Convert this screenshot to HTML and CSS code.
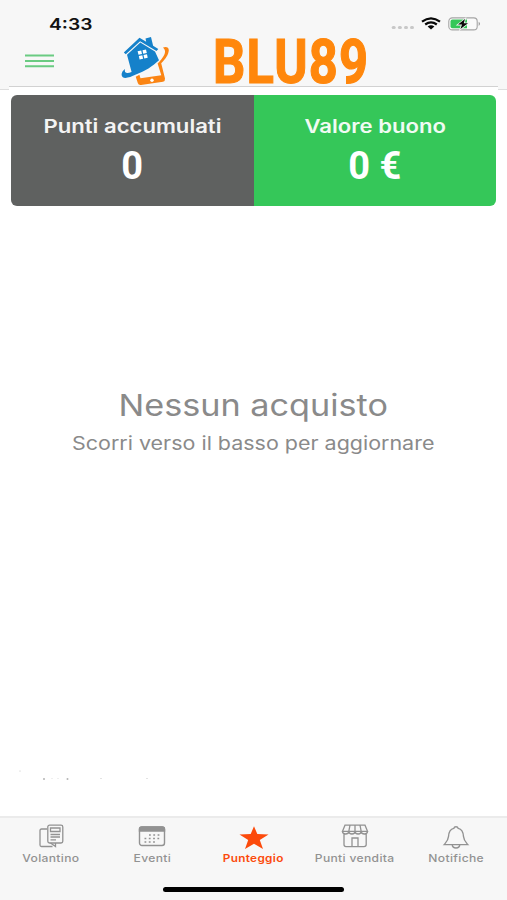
FILE: index.html
```html
<!DOCTYPE html>
<html lang="it">
<head>
<meta charset="utf-8">
<title>BLU89</title>
<link rel="stylesheet" href="styles.css">
</head>
<body>
<div class="app">
  <header class="header">
    <div class="status">
      <span class="time"><span class="fit">4:33</span></span>
      <div class="indicators">
        <svg class="signal" width="24" height="5" viewBox="0 0 24 5" fill="#c8c8c8"><rect x="0.7" y="1" width="4" height="3" rx="1.5"/><rect x="6.9" y="1" width="4" height="3" rx="1.5"/><rect x="13" y="1" width="4" height="3" rx="1.5"/><rect x="19" y="1" width="4" height="3" rx="1.5"/></svg>
        <svg class="wifi" width="20" height="13" viewBox="0 0 20 13" fill="none" stroke="#080808" stroke-width="2.2"><path d="M1 4.7Q10-1.9 19 4.7M4.2 7.5Q10 3.2 15.8 7.5"/><path d="M6.6 9.4Q10 7 13.4 9.4L10 12.4Z" fill="#080808" stroke="none"/></svg>
        <svg class="battery" width="33" height="14" viewBox="0 0 33 14"><rect x=".8" y=".9" width="28.4" height="12" rx="3.5" fill="#fafafa" stroke="#a5a5a5" stroke-width="1.1"/><path d="M4.5 2.5H19V11.3H4.5Q2.5 11.3 2.5 9.3V4.5Q2.5 2.5 4.5 2.5Z" fill="#35c759"/><path d="M17 2L10 7.6H14L12.4 12L20 6.2H15.8Z" fill="#080808" stroke="#f5f5f5" stroke-width="1.6" paint-order="stroke"/><path d="M30.7 4.8Q33.3 6.8 30.7 9Z" fill="#999"/></svg>
      </div>
    </div>
    <div class="brandbar">
      <svg class="menu" width="29" height="14" viewBox="0 0 29 14" stroke="#6acb82" stroke-width="2"><path d="M0 1.5H29M0 7H29M0 12.3H29"/></svg>
      <svg class="logo" width="50" height="50" viewBox="0 0 50 50">
        <path d="M42 10.5Q47.5 9 47.8 13.2C47.6 17.5 44.5 22 40.2 26.2L44 41.5Q44.3 44 42 44.7L20 48Q17.4 48.3 16.8 46L14.7 39.8L18.4 37.8L19.5 41.3L40.3 38.2L36.6 26.5C42 21 47 14.6 42 10.5Z" fill="#fb8514"/>
        <circle cx="31" cy="43.3" r="1.7" fill="#fff"/>
        <path d="M2.8 15.4L18.5 0.7L25.2 4.7L24.5 1.6L30 0L32.1 8.8L37.3 12L35.5 14.1L19.1 4.2L4.8 17.3Z" fill="#1581ca"/>
        <path d="M6 17.8L19.3 5.5L34 14.4L38 23.3C31.8 29.3 23.8 34.4 14.9 37.6C8 41 1.2 42.8.6 38C.4 35.6 2 33.4 4 32C3 36 5.6 37 10.6 35Z" fill="#1581ca"/>
        <path d="M16.6 14.3L20.2 13.5L21 17L17.5 17.8ZM21.5 13.2L25 12.4L25.8 16L22.2 16.7ZM17.8 19L21.3 18.3L22.1 21.7L18.6 22.4ZM22.5 18L26 17.3L26.7 20.7L23.3 21.4Z" fill="#fff"/>
      </svg>
      <h1 class="brand"><span class="fit">BLU89</span></h1>
    </div>
  </header>
  <main class="main">
    <section class="summary">
      <div class="card card-points"><p class="card-label"><span class="fit">Punti accumulati</span></p><p class="card-value">0</p></div>
      <div class="card card-value-bg"><p class="card-label"><span class="fit">Valore buono</span></p><p class="card-value">0 €</p></div>
    </section>
    <section class="empty">
      <h2><span class="fit">Nessun acquisto</span></h2>
      <p><span class="fit">Scorri verso il basso per aggiornare</span></p>
    </section>
    <svg class="specks" width="140" height="12" viewBox="0 0 140 12" fill="#b5b5b5"><circle cx="11" cy="2" r=".5"/><circle cx="35" cy="10" r="1"/><circle cx="43" cy="9.5" r=".4"/><circle cx="49" cy="9.5" r=".4"/><circle cx="58.5" cy="10" r="1"/><circle cx="92" cy="9.5" r=".5"/><circle cx="138" cy="9.5" r=".5"/></svg>
  </main>
  <footer class="footer">
    <nav class="tabs">
      <a class="tab"><svg width="28" height="26" viewBox="0 0 28 26" fill="none" stroke="#929292" stroke-width="1.3"><path d="M10 5H4.5Q3 5 3 6.5V21Q3 22.5 4.5 22.5H15.5M13.5 19L18.5 22.5V19"/><rect x="10.8" y="1.2" width="15" height="17.8" rx="1.8"/><path d="M13.5 4H23V7.5H13.5ZM13.5 10.5H23M13.5 13H23M13.5 15.8H19"/></svg><span class="fit">Volantino</span></a>
      <a class="tab"><svg width="28" height="26" viewBox="0 0 28 26" fill="none" stroke="#929292" stroke-width="1.4"><rect x="1.5" y="3" width="25" height="18.5" rx="2.5"/><path d="M1.5 7V5Q1.5 3 4 3H24Q26.5 3 26.5 5V7Z" fill="#929292"/><path d="M11 11H23M6.5 14.5H23M6.5 18H19" stroke-width="1.7" stroke-dasharray="1.8 2.5"/></svg><span class="fit">Eventi</span></a>
      <a class="tab active"><svg width="30" height="26" viewBox="0 0 30 26"><path d="M15 2.3L18.3 10.1L29.5 10.4L20.8 16L24 25L15 19.8L6 25L9.2 16L.5 10.4L11.7 10.1Z" fill="#fc4a0b"/></svg><span class="fit">Punteggio</span></a>
      <a class="tab"><svg width="28" height="26" viewBox="0 0 28 26" fill="none" stroke="#929292" stroke-width="1.3"><path d="M4 1.2H24L26.5 7.3H1.5ZM9 1.2L7.8 7.3M14 1.2V7.3M19 1.2L20.2 7.3M1.5 7.3Q1.5 10 4.5 10Q7.8 10 7.8 7.3Q7.8 10 11 10Q14 10 14 7.3Q14 10 17.2 10Q20.2 10 20.2 7.3Q20.2 10 23.4 10Q26.5 10 26.5 7.3M3 10V20.5Q3 22.6 5 22.6H23Q25.2 22.6 25.2 20.5V10M11 22.6V14H17V22.6"/></svg><span class="fit">Punti vendita</span></a>
      <a class="tab"><svg width="28" height="26" viewBox="0 0 28 26" fill="none" stroke="#929292" stroke-width="1.4"><path d="M14 2.7Q15.8 2.7 16.2 4.4C20.7 5.4 21.3 9.3 21.5 12.5C21.8 16.5 23.8 18.3 25.8 20.6H2.2C4.2 18.3 6.2 16.5 6.5 12.5C6.7 9.3 7.3 5.4 11.8 4.4Q12.2 2.7 14 2.7ZM10.2 20.6Q10.5 24 14 24Q17.5 24 17.8 20.6"/></svg><span class="fit">Notifiche</span></a>
    </nav>
    <div class="home"></div>
  </footer>
</div>
</body>
</html>
```

FILE: styles.css
```css
* { box-sizing: border-box; }
body, h1, h2, p { margin: 0; }
body { background: #fff; font-family: Inter, "Liberation Sans", sans-serif; }
.app { width: 507px; height: 900px; display: flex; flex-direction: column; overflow: hidden; }
.fit { display: inline-block; white-space: nowrap; }
.header { height: 90px; flex: none; background: #f7f7f7; border-bottom: 1px solid #dedede; }
.status { height: 36px; display: flex; justify-content: space-between; padding: 14px 26px 0 49px; }
.time { font-size: 16px; line-height: 20px; font-weight: 600; color: #111; }
.time .fit { transform: scaleX(1.2); transform-origin: left; }
.indicators { display: flex; align-items: flex-start; }
.signal { margin-top: 11px; }
.wifi { margin: 3px 7px 0 6px; }
.battery { margin-top: 3px; }
.brandbar { display: flex; padding-left: 25px; height: 50px; }
.menu { margin-top: 18px; }
.logo { margin: 1px 0 0 67px; }
.brand { margin-left: 42px; font: 700 61px/50px Roboto, sans-serif; color: #ff870c; -webkit-text-stroke: 1.2px #ff870c; letter-spacing: 1.4px; }
.brand .fit { transform: translateY(1px) scaleX(.83); transform-origin: left; }
.main { position: relative; flex: 1; display: flex; flex-direction: column; margin: -4px 9px 0; border-top: 1px solid #d2d2d2; background: #fff; }
.summary { flex: none; display: flex; height: 111px; margin: 8px 2px 0; border-radius: 6px; overflow: hidden; color: #fff; text-align: center; }
.card { flex: 1; padding-top: 19px; }
.card-points { background: #5f6160; }
.card-value-bg { background: #35c759; }
.card-label { font-size: 18.5px; line-height: 24px; font-weight: 600; opacity: .93; }
.card-label .fit { transform: scaleX(1.195); }
.card-value { font: 700 38px/44px Roboto, sans-serif; margin-top: 6px; }
.empty { margin-top: 179px; text-align: center; color: #8a8a8a; }
.empty h2 { font-size: 30px; line-height: 40px; font-weight: 400; }
.empty h2 .fit { transform: scaleX(1.14); }
.empty p { font-size: 18.5px; line-height: 24px; margin-top: 6px; }
.empty p .fit { transform: scaleX(1.16); }
.specks { margin-top: auto; margin-bottom: 35px; }
.footer { flex: none; height: 84px; background: #f7f7f7; border-top: 2px solid #ebebeb; }
.tabs { display: flex; height: 69px; }
.tab { flex: 1; display: flex; flex-direction: column; align-items: center; padding-top: 6px; font-size: 10.5px; line-height: 14px; font-weight: 500; letter-spacing: .3px; color: #929292; }
.tab .fit { transform: scaleX(1.15); margin-top: 2px; }
.tab.active { color: #fc4a0b; font-weight: 600; }
.tab.active .fit { transform: scaleX(1.12); }
.home { width: 181px; height: 5px; border-radius: 3px; background: #000; margin: 0 auto; }
```
